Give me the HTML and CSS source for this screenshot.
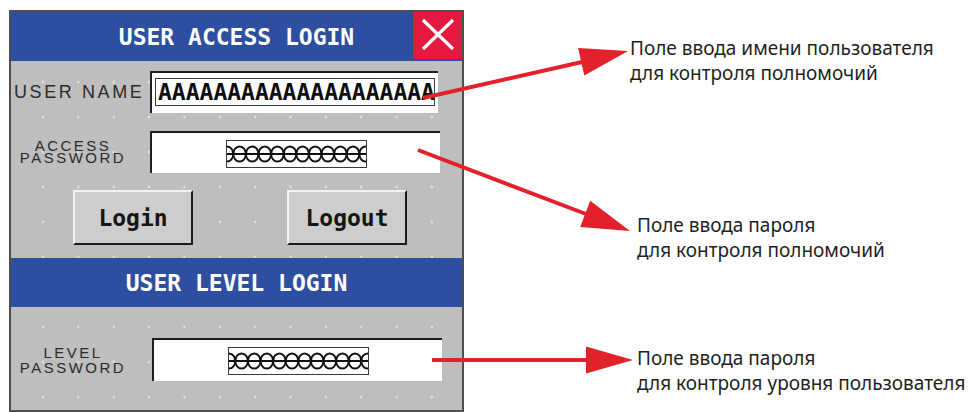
FILE: index.html
```html
<!DOCTYPE html>
<html>
  <head>
    <title>User Access Login</title>
    <link rel="stylesheet" href="styles.css">
  </head>
  <body>
    <svg class="defs" width="0" height="0">
      <symbol id="chain" viewBox="0 0 139 26">
        <line x1="0" y1="13" x2="139" y2="13" stroke="#111" stroke-width="2"/>
        <g fill="none" stroke="#111" stroke-width="2">
          <ellipse cx="0" cy="13" rx="6.3" ry="7.5"/>
          <ellipse cx="12.6" cy="13" rx="6.3" ry="7.5"/>
          <ellipse cx="25.2" cy="13" rx="6.3" ry="7.5"/>
          <ellipse cx="37.8" cy="13" rx="6.3" ry="7.5"/>
          <ellipse cx="50.4" cy="13" rx="6.3" ry="7.5"/>
          <ellipse cx="63" cy="13" rx="6.3" ry="7.5"/>
          <ellipse cx="75.6" cy="13" rx="6.3" ry="7.5"/>
          <ellipse cx="88.2" cy="13" rx="6.3" ry="7.5"/>
          <ellipse cx="100.8" cy="13" rx="6.3" ry="7.5"/>
          <ellipse cx="113.4" cy="13" rx="6.3" ry="7.5"/>
          <ellipse cx="126" cy="13" rx="6.3" ry="7.5"/>
          <ellipse cx="138.6" cy="13" rx="6.3" ry="7.5"/>
        </g>
      </symbol>
    </svg>

    <div class="page">
      <div class="panel">
        <div class="titlebar">
          <h1 class="title">USER ACCESS LOGIN</h1>
          <button class="close">
            <svg width="49" height="47" viewBox="0 0 49 47">
              <path d="M10 8 L40 37 M40 8 L10 37" stroke="#fff" stroke-width="3.2" fill="none"/>
            </svg>
          </button>
        </div>

        <div class="row row-user">
          <div class="label">USER NAME</div>
          <div class="field field-user">
            <div class="entry">AAAAAAAAAAAAAAAAAAAAA</div>
          </div>
        </div>

        <div class="row row-pass">
          <div class="label label-two"><div>ACCESS</div><div>PASSWORD</div></div>
          <div class="field">
            <div class="mask"><svg width="139" height="26"><use href="#chain"/></svg></div>
          </div>
        </div>

        <div class="buttons">
          <button class="key">Login</button>
          <button class="key">Logout</button>
        </div>

        <div class="titlebar titlebar-level">
          <h2 class="title">USER LEVEL LOGIN</h2>
        </div>

        <div class="row row-level">
          <div class="label label-two"><div>LEVEL</div><div>PASSWORD</div></div>
          <div class="field">
            <div class="mask"><svg width="139" height="26"><use href="#chain"/></svg></div>
          </div>
        </div>
      </div>

      <div class="notes">
        <p class="note note-user">Поле ввода имени пользователя<br>для контроля полномочий</p>
        <p class="note note-pass">Поле ввода пароля<br>для контроля полномочий</p>
        <p class="note note-level">Поле ввода пароля<br>для контроля уровня пользователя</p>
      </div>

      <svg class="arrows" width="974" height="412" viewBox="0 0 974 412">
        <g stroke="#e3212b" stroke-width="4">
          <line x1="423" y1="98" x2="582" y2="62"/>
          <line x1="418" y1="150" x2="586" y2="214"/>
          <line x1="432" y1="360" x2="588" y2="360"/>
        </g>
        <g fill="#e3212b">
          <polygon points="628,51 584.3,75.4 578.1,48"/>
          <polygon points="630,231 580.2,227 590.2,200.8"/>
          <polygon points="633,360 586,346.5 586,373.5"/>
        </g>
      </svg>
    </div>
  </body>
</html>
```

FILE: styles.css
```css
* {
  box-sizing: border-box;
}
body {
  margin: 0;
  background: #fff;
  overflow: hidden;
}
.defs {
  position: absolute;
}
.page {
  position: relative;
  display: flex;
  align-items: flex-start;
  height: 412px;
  padding: 10px 0 0 9px;
}
.panel {
  flex: none;
  width: 455px;
  height: 402px;
  border: 2px solid #4f4f4f;
  background-color: #bebebe;
  background-image: radial-gradient(circle, #e6e6e6 0.8px, transparent 1.6px);
  background-size: 35.36px 35px;
  background-position: 14.3px 17.5px;
  display: flex;
  flex-direction: column;
  font-family: "Liberation Sans", Arial, sans-serif;
  color: #2b2b2b;
}
.titlebar {
  display: grid;
  grid-template-columns: 49px 1fr 49px;
  align-items: start;
  height: 49px;
  background: #2e4f9f;
}
.title {
  grid-column: 2;
  margin: 0;
  text-align: center;
  font: bold 23px/51px "DejaVu Sans Mono", monospace;
  color: #fff;
}
.close {
  grid-column: 3;
  display: block;
  width: 49px;
  height: 47px;
  padding: 0;
  border: none;
  background: #e5193f;
}
.close svg {
  display: block;
}
.row {
  display: flex;
  align-items: center;
}
.row-user {
  margin-top: 10px;
}
.row-pass {
  margin-top: 18px;
}
.row-level {
  margin-top: 31px;
}
.label {
  flex: none;
  width: 139px;
  padding-left: 3px;
  font-size: 18px;
  letter-spacing: 2.6px;
  white-space: nowrap;
}
.label-two {
  display: flex;
  flex-direction: column;
  align-items: center;
  padding: 0 19px 0 4px;
  font-size: 15px;
  letter-spacing: 2.5px;
}
.label-two div {
  height: 12.5px;
  line-height: 12.5px;
}
.row-level .label-two {
  width: 141px;
  padding-right: 21px;
}
.row-level .label-two div {
  height: 15px;
  line-height: 15px;
}
.field {
  display: flex;
  align-items: center;
  justify-content: center;
  width: 290px;
  height: 42px;
  background: #fff;
  border-top: 2px solid #1e1e1e;
  border-left: 2px solid #1e1e1e;
}
.row-level .field {
  height: 43px;
}
.field-user {
  width: 288px;
  align-items: flex-start;
  justify-content: flex-start;
  padding: 5px 3px 0 3px;
}
.entry {
  width: 280px;
  height: 28px;
  border: 1px solid #3a3a3a;
  padding-left: 2px;
  overflow: hidden;
  white-space: nowrap;
  font: bold 23px/27px "DejaVu Sans Mono", monospace;
  color: #0d0d0d;
}
.mask {
  width: 141px;
  height: 28px;
  border: 1px solid #3a3a3a;
  margin-top: 1px;
}
.mask svg {
  display: block;
}
.buttons {
  display: flex;
  gap: 94px;
  padding-left: 62px;
  margin-top: 17px;
}
.key {
  width: 120px;
  height: 55px;
  padding: 0;
  background: #cdcdcd;
  border: 2px solid;
  border-color: #f2f2f2 #1a1a1a #1a1a1a #f2f2f2;
  font: bold 23px "DejaVu Sans Mono", monospace;
  color: #151515;
}
.titlebar-level {
  margin-top: 13px;
}
.notes {
  margin-left: 166px;
  padding-top: 26px;
  font: 19px/25px "Noto Sans", sans-serif;
  color: #231f20;
  white-space: nowrap;
}
.note {
  margin: 0;
}
.note-pass {
  margin-top: 127px;
  padding-left: 7px;
}
.note-level {
  margin-top: 83px;
  padding-left: 7px;
}
.arrows {
  position: absolute;
  left: 0;
  top: 0;
  pointer-events: none;
}
```
